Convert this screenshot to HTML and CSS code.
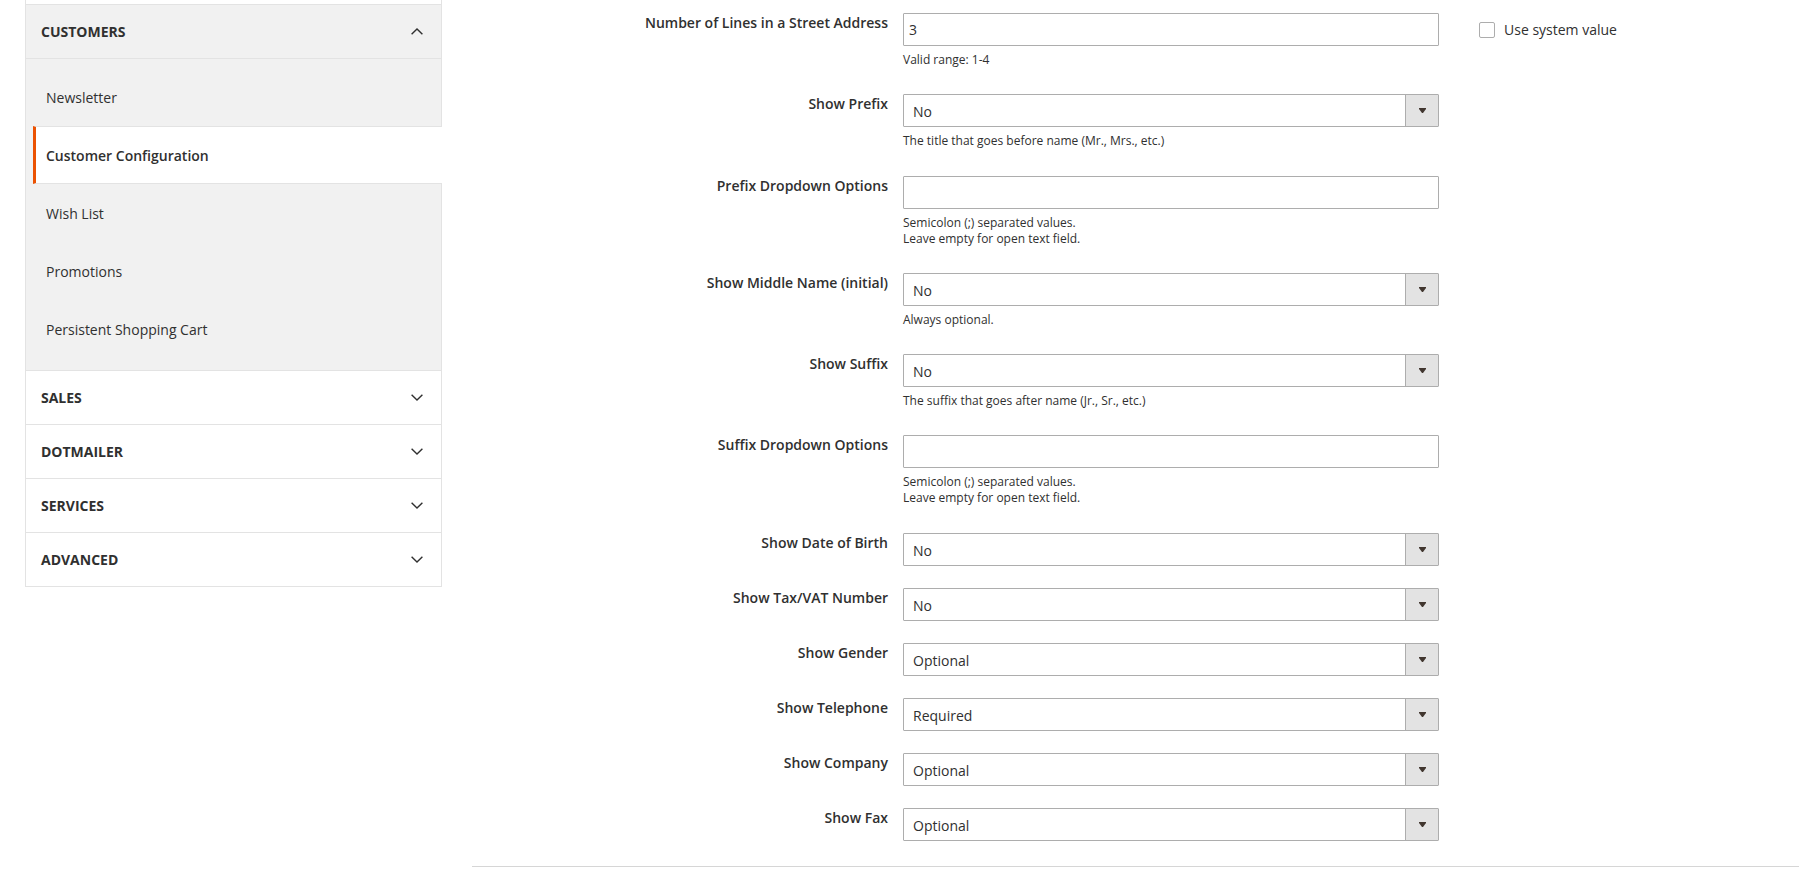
FILE: index.html
```html
<!DOCTYPE html>
<html lang="en">
<head>
<meta charset="utf-8">
<title>Customer Configuration</title>
<link rel="stylesheet" href="styles.css">
</head>
<body>
<div class="page">
  <aside class="nav">
    <div class="nav-tail"></div>
    <div class="nav-section open">
      <div class="nav-title"><span>Customers</span>
        <svg class="chev" width="12" height="7" viewBox="0 0 12 7"><path d="M0.6 6.3 L6 1 L11.4 6.3" fill="none" stroke="#303030" stroke-width="1.4"/></svg>
      </div>
      <ul class="nav-items">
        <li class="nav-item">Newsletter</li>
        <li class="nav-item active">Customer Configuration</li>
        <li class="nav-item">Wish List</li>
        <li class="nav-item">Promotions</li>
        <li class="nav-item">Persistent Shopping Cart</li>
      </ul>
    </div>
    <div class="nav-section">
      <div class="nav-title"><span>Sales</span>
        <svg class="chev" width="12" height="7" viewBox="0 0 12 7"><path d="M0.6 0.7 L6 6 L11.4 0.7" fill="none" stroke="#303030" stroke-width="1.4"/></svg>
      </div>
    </div>
    <div class="nav-section">
      <div class="nav-title"><span>Dotmailer</span>
        <svg class="chev" width="12" height="7" viewBox="0 0 12 7"><path d="M0.6 0.7 L6 6 L11.4 0.7" fill="none" stroke="#303030" stroke-width="1.4"/></svg>
      </div>
    </div>
    <div class="nav-section">
      <div class="nav-title"><span>Services</span>
        <svg class="chev" width="12" height="7" viewBox="0 0 12 7"><path d="M0.6 0.7 L6 6 L11.4 0.7" fill="none" stroke="#303030" stroke-width="1.4"/></svg>
      </div>
    </div>
    <div class="nav-section">
      <div class="nav-title"><span>Advanced</span>
        <svg class="chev" width="12" height="7" viewBox="0 0 12 7"><path d="M0.6 0.7 L6 6 L11.4 0.7" fill="none" stroke="#303030" stroke-width="1.4"/></svg>
      </div>
    </div>
  </aside>

  <main class="main">
    <div class="fieldset">
      <div class="row">
        <label class="label">Number of Lines in a Street Address</label>
        <div class="control">
          <input class="input" type="text" value="3">
          <div class="note">Valid range: 1-4</div>
        </div>
        <div class="extra"><span class="checkbox"></span><span class="extra-text">Use system value</span></div>
      </div>

      <div class="row">
        <label class="label">Show Prefix</label>
        <div class="control">
          <div class="select"><span class="select-value">No</span><span class="select-btn"><svg width="7" height="5" viewBox="0 0 7 5"><path d="M0 0 H7 V1 L4 5 H3 L0 1 Z" fill="#41362f"/></svg></span></div>
          <div class="note">The title that goes before name (Mr., Mrs., etc.)</div>
        </div>
      </div>

      <div class="row">
        <label class="label">Prefix Dropdown Options</label>
        <div class="control">
          <input class="input" type="text" value="">
          <div class="note">Semicolon (;) separated values.<br>Leave empty for open text field.</div>
        </div>
      </div>

      <div class="row">
        <label class="label">Show Middle Name (initial)</label>
        <div class="control">
          <div class="select"><span class="select-value">No</span><span class="select-btn"><svg width="7" height="5" viewBox="0 0 7 5"><path d="M0 0 H7 V1 L4 5 H3 L0 1 Z" fill="#41362f"/></svg></span></div>
          <div class="note">Always optional.</div>
        </div>
      </div>

      <div class="row">
        <label class="label">Show Suffix</label>
        <div class="control">
          <div class="select"><span class="select-value">No</span><span class="select-btn"><svg width="7" height="5" viewBox="0 0 7 5"><path d="M0 0 H7 V1 L4 5 H3 L0 1 Z" fill="#41362f"/></svg></span></div>
          <div class="note">The suffix that goes after name (Jr., Sr., etc.)</div>
        </div>
      </div>

      <div class="row">
        <label class="label">Suffix Dropdown Options</label>
        <div class="control">
          <input class="input" type="text" value="">
          <div class="note">Semicolon (;) separated values.<br>Leave empty for open text field.</div>
        </div>
      </div>

      <div class="row">
        <label class="label">Show Date of Birth</label>
        <div class="control">
          <div class="select"><span class="select-value">No</span><span class="select-btn"><svg width="7" height="5" viewBox="0 0 7 5"><path d="M0 0 H7 V1 L4 5 H3 L0 1 Z" fill="#41362f"/></svg></span></div>
        </div>
      </div>

      <div class="row">
        <label class="label">Show Tax/VAT Number</label>
        <div class="control">
          <div class="select"><span class="select-value">No</span><span class="select-btn"><svg width="7" height="5" viewBox="0 0 7 5"><path d="M0 0 H7 V1 L4 5 H3 L0 1 Z" fill="#41362f"/></svg></span></div>
        </div>
      </div>

      <div class="row">
        <label class="label">Show Gender</label>
        <div class="control">
          <div class="select"><span class="select-value">Optional</span><span class="select-btn"><svg width="7" height="5" viewBox="0 0 7 5"><path d="M0 0 H7 V1 L4 5 H3 L0 1 Z" fill="#41362f"/></svg></span></div>
        </div>
      </div>

      <div class="row">
        <label class="label">Show Telephone</label>
        <div class="control">
          <div class="select"><span class="select-value">Required</span><span class="select-btn"><svg width="7" height="5" viewBox="0 0 7 5"><path d="M0 0 H7 V1 L4 5 H3 L0 1 Z" fill="#41362f"/></svg></span></div>
        </div>
      </div>

      <div class="row">
        <label class="label">Show Company</label>
        <div class="control">
          <div class="select"><span class="select-value">Optional</span><span class="select-btn"><svg width="7" height="5" viewBox="0 0 7 5"><path d="M0 0 H7 V1 L4 5 H3 L0 1 Z" fill="#41362f"/></svg></span></div>
        </div>
      </div>

      <div class="row">
        <label class="label">Show Fax</label>
        <div class="control">
          <div class="select"><span class="select-value">Optional</span><span class="select-btn"><svg width="7" height="5" viewBox="0 0 7 5"><path d="M0 0 H7 V1 L4 5 H3 L0 1 Z" fill="#41362f"/></svg></span></div>
        </div>
      </div>
    </div>
  </main>
</div>
</body>
</html>
```

FILE: styles.css
```css
* { box-sizing: border-box; }

html, body {
  margin: 0;
  padding: 0;
  background: #ffffff;
}

body {
  font-family: "Open Sans", "Liberation Sans", sans-serif;
  color: #303030;
  font-size: 14px;
  overflow: hidden;
}

.page {
  display: grid;
  grid-template-columns: 417px 1fr;
  column-gap: 30px;
  padding-left: 25px;
  align-items: start;
}

/* ---------- sidebar ---------- */
.nav {
  border-left: 1px solid #e3e3e3;
  border-right: 1px solid #e3e3e3;
  border-bottom: 1px solid #e3e3e3;
  background: #ffffff;
}

.nav-tail {
  height: 4px;
}

.nav-section {
  border-top: 1px solid #e3e3e3;
}

.nav-section.open {
  background: #f1f1f1;
}

.nav-title {
  height: 53px;
  display: flex;
  align-items: center;
  justify-content: space-between;
  padding: 0 18px 0 15px;
  font-size: 14px;
  font-weight: 700;
  text-transform: uppercase;
  color: #303030;
}

.chev {
  display: block;
}

.nav-items {
  list-style: none;
  margin: 0;
  padding: 9px 0 12px;
  border-top: 1px solid #e3e3e3;
}

.nav-item {
  height: 58px;
  display: flex;
  align-items: center;
  padding-left: 20px;
  font-size: 14px;
  color: #303030;
}

.nav-item.active {
  margin-left: 7px;
  margin-right: -1px;
  padding-left: 10px;
  background: #ffffff;
  border-left: 3px solid #eb5202;
  border-top: 1px solid #e3e3e3;
  border-bottom: 1px solid #e3e3e3;
  font-weight: 600;
}

/* ---------- main form ---------- */
.main {
  padding-top: 13px;
}

.fieldset {
  border-bottom: 1px solid #d6d6d6;
  padding-bottom: 3px;
}

.row {
  display: grid;
  grid-template-columns: 416px 536px 1fr;
  column-gap: 15px;
  padding-bottom: 22px;
  align-items: start;
}

.label {
  text-align: right;
  font-size: 14px;
  font-weight: 600;
  line-height: 19px;
  color: #303030;
}

.control {
  display: flex;
  flex-direction: column;
}

.input {
  display: block;
  width: 100%;
  height: 33px;
  margin: 0;
  padding: 0 5px;
  border: 1px solid #adadad;
  border-radius: 1px;
  font-family: "Open Sans", "Liberation Sans", sans-serif;
  font-size: 14px;
  color: #303030;
  background: #ffffff;
  outline: none;
}

.select {
  display: flex;
  height: 33px;
  border: 1px solid #adadad;
  border-radius: 1px;
  background: #ffffff;
}

.select-value {
  flex: 1;
  display: flex;
  align-items: center;
  padding-left: 9px;
  padding-top: 2px;
  font-size: 14px;
  color: #303030;
}

.select-btn {
  width: 33px;
  display: flex;
  align-items: center;
  justify-content: center;
  background: #e3e3e3;
  border-left: 1px solid #adadad;
}

.select-btn svg {
  display: block;
}

.note {
  margin-top: 6px;
  margin-bottom: 4.25px;
  font-size: 12px;
  line-height: 16px;
  color: #303030;
}

.extra {
  display: flex;
  align-items: center;
  padding-left: 25px;
  height: 33px;
}

.checkbox {
  width: 16px;
  height: 16px;
  border: 1px solid #adadad;
  border-radius: 2px;
  background: #ffffff;
  margin-right: 9px;
}

.extra-text {
  font-size: 14px;
  color: #303030;
}
```
